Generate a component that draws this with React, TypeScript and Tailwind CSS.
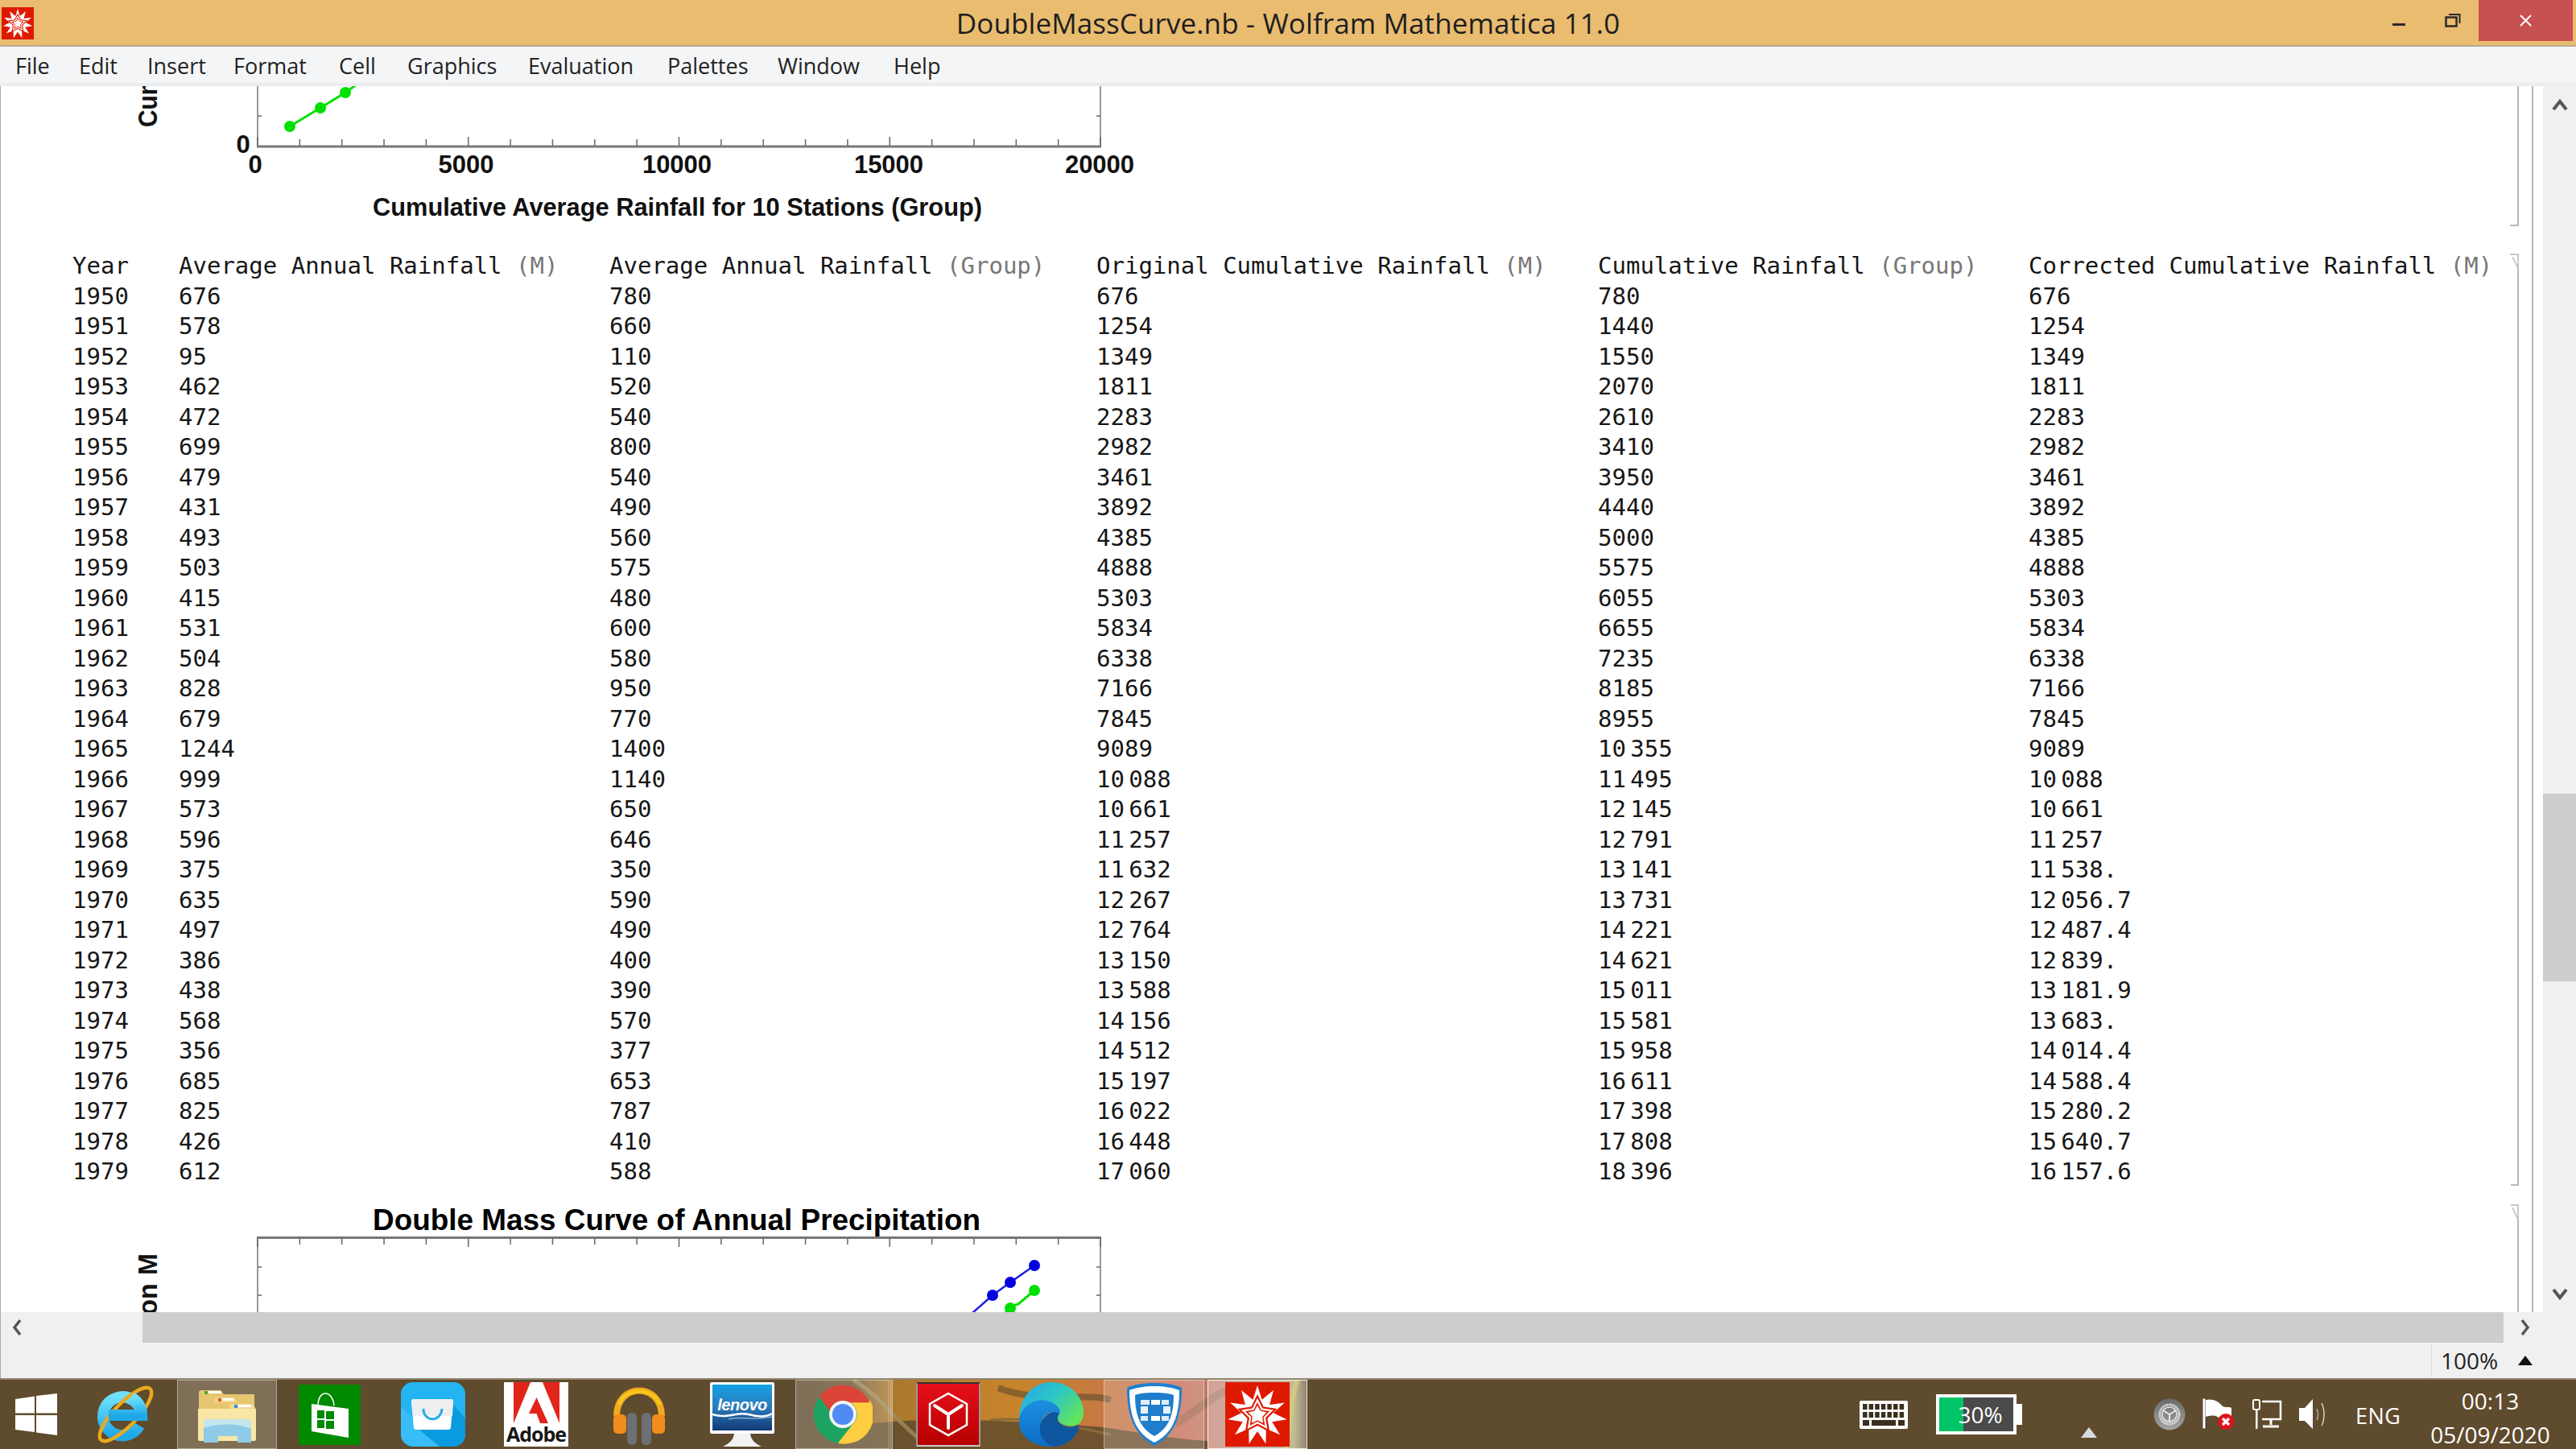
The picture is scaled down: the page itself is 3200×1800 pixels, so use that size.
import React from "react";

const rows: string[][] = [
  ["1950","676","780","676","780","676"],
  ["1951","578","660","1254","1440","1254"],
  ["1952","95","110","1349","1550","1349"],
  ["1953","462","520","1811","2070","1811"],
  ["1954","472","540","2283","2610","2283"],
  ["1955","699","800","2982","3410","2982"],
  ["1956","479","540","3461","3950","3461"],
  ["1957","431","490","3892","4440","3892"],
  ["1958","493","560","4385","5000","4385"],
  ["1959","503","575","4888","5575","4888"],
  ["1960","415","480","5303","6055","5303"],
  ["1961","531","600","5834","6655","5834"],
  ["1962","504","580","6338","7235","6338"],
  ["1963","828","950","7166","8185","7166"],
  ["1964","679","770","7845","8955","7845"],
  ["1965","1244","1400","9089","10355","9089"],
  ["1966","999","1140","10088","11495","10088"],
  ["1967","573","650","10661","12145","10661"],
  ["1968","596","646","11257","12791","11257"],
  ["1969","375","350","11632","13141","11538."],
  ["1970","635","590","12267","13731","12056.7"],
  ["1971","497","490","12764","14221","12487.4"],
  ["1972","386","400","13150","14621","12839."],
  ["1973","438","390","13588","15011","13181.9"],
  ["1974","568","570","14156","15581","13683."],
  ["1975","356","377","14512","15958","14014.4"],
  ["1976","685","653","15197","16611","14588.4"],
  ["1977","825","787","16022","17398","15280.2"],
  ["1978","426","410","16448","17808","15640.7"],
  ["1979","612","588","17060","18396","16157.6"],
];

const headers: [string, string][] = [
  ["Year", ""],
  ["Average Annual Rainfall", "(M)"],
  ["Average Annual Rainfall", "(Group)"],
  ["Original Cumulative Rainfall", "(M)"],
  ["Cumulative Rainfall", "(Group)"],
  ["Corrected Cumulative Rainfall", "(M)"],
];

function Num({ v }: { v: string }) {
  const m = v.match(/^(\d{2})(\d{3}\.?\d*)$/);
  if (!m) return <span>{v}</span>;
  return (
    <span>
      {m[1]}
      <span className="text-[9px] leading-[0]"> </span>
      {m[2]}
    </span>
  );
}

function star(cx: number, cy: number, R: number, r: number, n: number) {
  const p: string[] = [];
  for (let i = 0; i < n * 2; i++) {
    const a = -Math.PI / 2 + (i * Math.PI) / n;
    const q = i % 2 === 0 ? R : r;
    p.push(`${(cx + q * Math.cos(a)).toFixed(1)},${(cy + q * Math.sin(a)).toFixed(1)}`);
  }
  return p.join(" ");
}

function Ticks({ y, dir }: { y: number; dir: number }) {
  const t = [];
  for (let i = 0; i <= 20; i++) {
    const x = 319 + i * 52.35;
    const len = i % 5 === 0 ? 11 : 8;
    t.push(<line key={i} x1={x} x2={x} y1={y} y2={y + dir * len} stroke="#666" strokeWidth="1.5" />);
  }
  return <>{t}</>;
}

function PlotTop() {
  return (
    <svg width="1420" height="190" className="block" style={{ fontFamily: "'Liberation Sans', sans-serif" }}>
      <line x1="319" x2="319" y1="0" y2="75" stroke="#777" strokeWidth="1.5" />
      <line x1="1366" x2="1366" y1="0" y2="75" stroke="#777" strokeWidth="1.5" />
      <line x1="318" x2="1367" y1="75" y2="75" stroke="#777" strokeWidth="3" />
      <Ticks y={74} dir={-1} />
      <line x1="319" x2="324" y1="37" y2="37" stroke="#666" strokeWidth="1.5" />
      <line x1="1361" x2="1366" y1="37" y2="37" stroke="#666" strokeWidth="1.5" />
      <polyline points="359,50 397,27 428,8 442,-2" fill="none" stroke="#00e000" strokeWidth="3" />
      <circle cx="359" cy="50" r="7" fill="#00e000" />
      <circle cx="397" cy="27" r="7" fill="#00e000" />
      <circle cx="428" cy="8" r="7" fill="#00e000" />
      <text transform="translate(194 51) rotate(-90) scale(0.88 1)" fontSize="34" fontWeight="700" fill="#111">Cumulative Precipitation</text>
      <g fontSize="31" fontWeight="700" fill="#111" textAnchor="middle">
        <text x="301" y="83">0</text>
        <text x="316" y="108">0</text>
        <text x="578" y="108">5000</text>
        <text x="840" y="108">10000</text>
        <text x="1103" y="108">15000</text>
        <text x="1365" y="108">20000</text>
      </g>
      <text x="462" y="161" fontSize="31" fontWeight="700" fill="#111" textLength="757" lengthAdjust="spacingAndGlyphs">
        Cumulative Average Rainfall for 10 Stations (Group)
      </text>
    </svg>
  );
}

function PlotBottom() {
  return (
    <svg width="1420" height="155" className="block" style={{ fontFamily: "'Liberation Sans', sans-serif" }}>
      <g transform="translate(0 -2)">
        <text x="462" y="55" fontSize="36" fontWeight="700" fill="#000" textLength="755" lengthAdjust="spacingAndGlyphs">
          Double Mass Curve of Annual Precipitation
        </text>
        <line x1="319" x2="319" y1="64" y2="157" stroke="#777" strokeWidth="1.5" />
        <line x1="1366" x2="1366" y1="64" y2="157" stroke="#777" strokeWidth="1.5" />
        <line x1="318" x2="1367" y1="64.5" y2="64.5" stroke="#777" strokeWidth="3" />
        <Ticks y={65} dir={1} />
        <line x1="319" x2="324" y1="101" y2="101" stroke="#666" strokeWidth="1.5" />
        <line x1="319" x2="324" y1="136" y2="136" stroke="#666" strokeWidth="1.5" />
        <line x1="1361" x2="1366" y1="101" y2="101" stroke="#666" strokeWidth="1.5" />
        <line x1="1361" x2="1366" y1="136" y2="136" stroke="#666" strokeWidth="1.5" />
        <polyline points="1284,99 1254,120 1232,136 1207,158" fill="none" stroke="#2020e8" strokeWidth="2.5" />
        <circle cx="1284" cy="99" r="7" fill="#0000e0" />
        <circle cx="1254" cy="120" r="7" fill="#0000e0" />
        <circle cx="1232" cy="136" r="7" fill="#0000e0" />
        <polyline points="1284,130 1264,147 1254,150 1248,158" fill="none" stroke="#00e000" strokeWidth="3" />
        <circle cx="1284" cy="130" r="7" fill="#00e000" />
        <circle cx="1254" cy="152" r="7" fill="#00e000" />
        <text transform="translate(194 84) rotate(-90) scale(0.95 1)" fontSize="34" fontWeight="700" fill="#111" textAnchor="end">
          Cumulative Precipitation<tspan dx="11">M</tspan>
        </text>
      </g>
    </svg>
  );
}

function Brackets() {
  return (
    <svg width="42" height="1523" className="absolute right-0 top-0" fill="none" stroke="#b8b8b8" strokeWidth="2">
      <path d="M11 0V173H1" />
      <path d="M29 0V1523" />
      <path d="M11 226V1365H2" />
      <path d="M1 209H11V226L4 212" strokeWidth="1.5" />
      <path d="M11 1408V1523" />
      <path d="M2 1390H11V1408L4 1393" strokeWidth="1.5" />
    </svg>
  );
}

function Win() {
  return (
    <svg width="52" height="52" viewBox="0 0 52 52" fill="#fff">
      <polygon points="0,7 24,3.5 24,24.5 0,24.5" />
      <polygon points="26,3 52,0 52,24.5 26,24.5" />
      <polygon points="0,27 24,27 24,48 0,45" />
      <polygon points="26,27 52,27 52,52 26,48.5" />
    </svg>
  );
}

function IE() {
  return (
    <svg width="74" height="72" viewBox="0 0 74 72" fill="none">
      <defs>
        <linearGradient id="ieg" x1="0" y1="0" x2="0" y2="1">
          <stop offset="0" stopColor="#6fe0fa" />
          <stop offset="1" stopColor="#1fa8e8" />
        </linearGradient>
      </defs>
      <path d="M17 37H58A24 24 0 1 0 55 50" stroke="url(#ieg)" strokeWidth="14" />
      <ellipse cx="38" cy="36" rx="44" ry="14" transform="rotate(-46 38 36)" stroke="#e9a91e" strokeWidth="4.5" />
      <path d="M17 37H58A24 24 0 0 0 45 15" stroke="url(#ieg)" strokeWidth="14" />
    </svg>
  );
}

function Folder() {
  return (
    <svg width="74" height="70" viewBox="0 0 74 70">
      <path d="M2 8a3 3 0 0 1 3-3h24l4 5h38v20H2z" fill="#e6c66f" />
      <rect x="9" y="6" width="4" height="4" fill="#53a83b" />
      <rect x="14" y="6" width="16" height="3" fill="#fff" />
      <path d="M22 14h24l4 6H22z" fill="#f2d98e" />
      <rect x="26" y="15" width="4" height="4" fill="#e25a1c" />
      <rect x="31" y="15" width="14" height="3" fill="#fff" />
      <path d="M40 22h30l3 8H40z" fill="#f2d98e" />
      <rect x="46" y="23" width="4" height="4" fill="#2c8ed6" />
      <rect x="51" y="23" width="16" height="3" fill="#fff" />
      <path d="M1 28h72v38a2 2 0 0 1-2 2H3a2 2 0 0 1-2-2z" fill="#f8e7a6" />
      <path d="M8 46a5 5 0 0 1 5-5h49a5 5 0 0 1 5 5v24H50V62H26v8H8z" fill="#8fcbe6" />
      <path d="M8 46a5 5 0 0 1 5-5h49a5 5 0 0 1 5 5v7C50 46 25 46 8 52z" fill="#c2e5ee" />
    </svg>
  );
}

function Store() {
  return (
    <svg width="77" height="75" viewBox="0 0 77 75">
      <rect width="77" height="75" fill="#008a00" />
      <path d="M24 26C24 6 42 6 44 26" fill="none" stroke="#fff" strokeWidth="1.5" />
      <polygon points="16,24 62,30 62,66 16,58" fill="#fff" />
      <rect x="23" y="32" width="9" height="10" fill="#008a00" />
      <rect x="34" y="33" width="10" height="10" fill="#008a00" />
      <rect x="23" y="44" width="9" height="10" fill="#008a00" />
      <rect x="34" y="45" width="10" height="10" fill="#008a00" />
    </svg>
  );
}

function Bag() {
  return (
    <svg width="80" height="80" viewBox="0 0 80 80">
      <rect width="80" height="80" rx="15" fill="#38bdf8" />
      <path d="M0 15A15 15 0 0 1 15 0H65A15 15 0 0 1 80 15V50L60 28H15V45L0 30z" fill="#1db0f0" opacity="0.7" />
      <path d="M65 28L80 45V65A15 15 0 0 1 65 80H48L18 55z" fill="#0a9ade" />
      <path d="M13 24a3 3 0 0 1 3-3H62a3 3 0 0 1 3 3l-3 32a3 3 0 0 1-3 3H19a3 3 0 0 1-3-3z" fill="#fff" />
      <path d="M13 24a3 3 0 0 1 3-3H62a3 3 0 0 1 3 3l-1 18H15z" fill="#eceeef" />
      <path d="M28 33c0 17 22 17 23 0" fill="none" stroke="#29a9e6" strokeWidth="3" />
    </svg>
  );
}

function Adobe() {
  return (
    <div className="w-[80px] h-[80px] bg-white flex flex-col items-center overflow-hidden">
      <svg width="57" height="51" viewBox="0 0 57 51" className="shrink-0">
        <polygon points="0,0 21,0 0,51" fill="#e1251b" />
        <polygon points="36,0 57,0 57,51" fill="#e1251b" />
        <polygon points="28.5,19 43,51 33,51 28.5,39 19,39" fill="#e1251b" />
      </svg>
      <div className="text-[25px] leading-[27px] font-bold text-[#161616] tracking-[-1px] font-['Open_Sans',sans-serif]">Adobe</div>
    </div>
  );
}

function Headphones() {
  return (
    <svg width="66" height="76" viewBox="0 0 66 76" fill="none">
      <path d="M5 40C5 -2 61 -2 61 40" stroke="#f2a91f" strokeWidth="8" />
      <path d="M8 26C14 4 52 4 58 26" stroke="#f7c91c" strokeWidth="4" />
      <rect x="1" y="38" width="16" height="24" rx="5" fill="#ee8d1c" />
      <rect x="49" y="38" width="16" height="24" rx="5" fill="#ee8d1c" />
      <rect x="18" y="36" width="12" height="40" rx="5" fill="#6c6f73" />
      <rect x="36" y="36" width="12" height="40" rx="5" fill="#6c6f73" />
    </svg>
  );
}

function Lenovo() {
  return (
    <div className="w-[80px] h-[80px] flex flex-col items-center">
      <div className="w-[80px] h-[64px] bg-white rounded-[2px] p-[3px] pb-[4px]">
        <div className="relative w-full h-full bg-gradient-to-b from-[#0aa2e4] via-[#2a7ab8] to-[#123a78] flex items-center justify-center overflow-hidden">
          <span className="text-[20px] font-bold italic text-white font-['Liberation_Sans',sans-serif] tracking-[-0.5px] -mt-[8px]">lenovo</span>
          <svg width="74" height="12" viewBox="0 0 74 12" className="absolute left-0 top-[33px]" fill="none" stroke="#fff">
            <path d="M0 4C20 10 30 0 45 4C55 7 65 8 74 3" strokeWidth="2.5" />
            <path d="M20 10C35 6 50 12 74 7" strokeWidth="1" opacity=".7" />
          </svg>
        </div>
      </div>
      <svg width="52" height="16" viewBox="0 0 52 16">
        <path d="M16 0H36C37 8 42 12 50 16H2C10 12 15 8 16 0z" fill="#f2f2f2" />
      </svg>
    </div>
  );
}

function Chrome() {
  return (
    <svg width="74" height="74" viewBox="0 0 48 48">
      <circle cx="24" cy="24" r="23.5" fill="#1da462" />
      <path d="M24 13H46A23.5 23.5 0 0 1 20 47.2L33.5 30A11 11 0 0 0 24 13z" fill="#ffcd40" />
      <path d="M24 .5A23.5 23.5 0 0 1 45.6 14.5H24A11 11 0 0 0 13.6 21.5L5 9.5A23.5 23.5 0 0 1 24 .5z" fill="#db4437" />
      <circle cx="24" cy="24" r="11" fill="#f3f5f7" />
      <circle cx="24" cy="24" r="8.5" fill="#4f8bf3" />
    </svg>
  );
}

function RedBox() {
  return (
    <div className="w-[80px] h-[80px] bg-gradient-to-b from-[#e6101a] to-[#b60000] border-t-[2px] border-x-[2px] border-b-[2px] border-t-[#333] border-x-[#999] border-b-[#c9c9c9] flex items-center justify-center">
      <svg width="50" height="56" viewBox="0 0 50 56" fill="none" stroke="#fff">
        <polygon points="25,2 48,15 48,41 25,54 2,41 2,15" strokeWidth="2.5" />
        <path d="M8 17L25 28L42 17M25 28V45" strokeWidth="4" strokeLinecap="round" />
      </svg>
    </div>
  );
}

function Edge() {
  return (
    <svg width="80" height="80" viewBox="0 0 80 80">
      <defs>
        <linearGradient id="eg1" x1="0" y1="0" x2="1" y2="0.7">
          <stop offset="0" stopColor="#2aa3e8" />
          <stop offset="0.5" stopColor="#2bc6c8" />
          <stop offset="1" stopColor="#62e45a" />
        </linearGradient>
        <linearGradient id="eg2" x1="0" y1="0" x2="0" y2="1">
          <stop offset="0" stopColor="#1d8ee0" />
          <stop offset="1" stopColor="#0a6ec4" />
        </linearGradient>
      </defs>
      <path d="M40 0C64 0 80 18 80 38C80 52 70 56 60 54C50 53 45 46 50 38C48 28 30 22 18 28C8 33 2 42 0 46C0 20 16 0 40 0z" fill="url(#eg1)" />
      <path d="M0 46C3 28 22 18 38 24C50 29 52 36 50 39C36 32 24 46 28 58C31 70 42 78 50 79C46 80 42 80 40 80C15 80 -2 65 0 46z" fill="url(#eg2)" />
      <path d="M50 39C46 44 47 52 58 55C66 57 72 54 74 53C76 60 64 80 42 80C32 77 24 66 26 55C28 42 42 33 50 39z" fill="#0f56a0" />
    </svg>
  );
}

function Shield() {
  return (
    <svg width="68" height="78" viewBox="0 0 68 78">
      <path d="M34 0C48 0 60 2 68 6C68 40 60 64 34 78C8 64 0 40 0 6C8 2 20 0 34 0z" fill="#1e80d0" />
      <path d="M34 4C46 4 58 6 65 9C65 40 58 62 34 74C10 62 3 40 3 9C10 6 22 4 34 4z" fill="#fff" />
      <path d="M34 12C46 12 53 13 58 15C58 40 52 56 34 66C16 56 10 40 10 15C15 13 22 12 34 12z" fill="#1f7dcb" />
      <g fill="#fff">
        <rect x="30" y="21" width="11" height="6" />
        <rect x="17" y="21" width="11" height="6" opacity=".85" />
        <rect x="43" y="21" width="9" height="6" opacity=".85" />
        <rect x="17" y="29" width="9" height="9" opacity=".9" />
        <rect x="45" y="29" width="9" height="9" opacity=".9" />
        <rect x="17" y="41" width="9" height="6" opacity=".85" />
        <rect x="30" y="41" width="11" height="6" />
        <rect x="43" y="41" width="9" height="6" opacity=".85" />
      </g>
    </svg>
  );
}

function Wolfram({ s }: { s: number }) {
  return (
    <svg width={s} height={s} viewBox="0 0 80 80">
      <rect width="80" height="80" fill="#df1900" />
      <polygon points={star(40, 41, 37, 20, 11)} fill="#fff" />
      <polygon points={star(40, 41, 26, 13, 5)} fill="#df1900" />
      <polygon points={star(40, 41, 21, 10.5, 5)} fill="#fff" />
      <polygon points={star(40, 41, 16, 8, 5)} fill="#df1900" />
      <polygon points={star(40, 41, 12, 6.5, 5)} fill="#fff" />
    </svg>
  );
}

function Keyboard() {
  return (
    <svg width="60" height="35" viewBox="0 0 60 35">
      <rect width="60" height="35" rx="2" fill="#fff" />
      <g fill="#3a2f1e">
        {[0, 1, 2, 3, 4, 5, 6].map((i) => (
          <React.Fragment key={i}>
            <rect x={4 + i * 7.6} y="4" width="5.5" height="7" />
            <rect x={4 + i * 7.6} y="14" width="5.5" height="7" />
          </React.Fragment>
        ))}
        <rect x="4" y="24" width="8" height="7" />
        <rect x="15" y="24" width="30" height="7" />
        <rect x="48" y="24" width="8" height="7" />
      </g>
    </svg>
  );
}

function Gear() {
  return (
    <svg width="40" height="40" viewBox="0 0 40 40" fill="none">
      <defs>
        <linearGradient id="gg" x1="0" y1="0" x2="0" y2="1">
          <stop offset="0" stopColor="#6a6a6a" />
          <stop offset="1" stopColor="#a5a5a5" />
        </linearGradient>
      </defs>
      <circle cx="20" cy="20" r="19.5" fill="url(#gg)" />
      <circle cx="20" cy="20" r="12" stroke="#e8e8e8" strokeWidth="3" strokeDasharray="1.5 .8" />
      <circle cx="20" cy="20" r="9" stroke="#e8e8e8" strokeWidth="1.5" />
      <path d="M12 15L20 20L28 15M20 20V30" stroke="#e8e8e8" strokeWidth="2" />
    </svg>
  );
}

function Flag() {
  return (
    <svg width="40" height="40" viewBox="0 0 40 40">
      <rect x="0" y="0" width="4" height="38" fill="#fff" stroke="#2a2114" strokeWidth=".8" />
      <path d="M4 2C14 0 20 4 25 10C30 12 34 10 36 12V28H24C18 20 12 21 4 23z" fill="#fff" />
      <circle cx="29" cy="29" r="10" fill="#e0121a" />
      <path d="M25 25L33 33M33 25L25 33" stroke="#fff" strokeWidth="3.2" />
    </svg>
  );
}

function Net() {
  return (
    <svg width="40" height="40" viewBox="0 0 40 40" fill="none">
      <rect x="3" y="2" width="8" height="12" rx="2" stroke="#fff" strokeWidth="2" />
      <rect x="6" y="14" width="2.5" height="24" fill="#fff" />
      <path d="M14 4H37V26H14" stroke="#fff" strokeWidth="2.5" />
      <path d="M25 26V33M15 35H35" stroke="#fff" strokeWidth="3" />
    </svg>
  );
}

function Speaker() {
  return (
    <svg width="36" height="40" viewBox="0 0 36 40" fill="none">
      <path d="M1 12H8L18 1V38L8 28H1z" fill="#fff" />
      <path d="M23 13C25 17 25 23 23 27" stroke="#b9b1a2" strokeWidth="1.5" />
      <path d="M29 6C33 14 33 26 29 34" stroke="#d8d2c6" strokeWidth="1.5" />
    </svg>
  );
}

function Wallpaper() {
  return (
    <svg className="absolute left-[1000px] top-0" width="650" height="88" viewBox="1000 0 650 88">
      <defs>
        <linearGradient id="wp" x1="0" y1="0" x2="1" y2="0">
          <stop offset="0" stopColor="#5f4b2d" />
          <stop offset="0.09" stopColor="#6d5733" />
          <stop offset="0.16" stopColor="#a9782c" />
          <stop offset="0.4" stopColor="#c8842c" />
          <stop offset="0.58" stopColor="#c57843" />
          <stop offset="0.72" stopColor="#c8705a" />
          <stop offset="0.82" stopColor="#b98574" />
          <stop offset="0.87" stopColor="#9f9a80" />
          <stop offset="0.935" stopColor="#a89f68" />
          <stop offset="0.96" stopColor="#5f4b2d" />
          <stop offset="1" stopColor="#5f4b2d" />
        </linearGradient>
      </defs>
      <rect x="1000" y="0" width="650" height="88" fill="url(#wp)" />
      <path d="M1000 70C1100 40 1240 50 1360 58C1400 62 1440 72 1500 76V88H1000z" fill="#5f4b2d" opacity=".85" />
      <path d="M1060 0C1100 25 1110 50 1150 80" fill="none" stroke="#a08a5c" strokeWidth="5" opacity=".8" />
      <path d="M1240 10C1290 30 1350 15 1380 25" fill="none" stroke="#5f4b2d" strokeWidth="8" opacity=".6" />
      <path d="M1230 50C1280 45 1340 60 1380 68" fill="none" stroke="#8a6a38" strokeWidth="3" />
      <path d="M1460 55C1500 30 1510 15 1540 8" fill="none" stroke="#8a5f42" strokeWidth="10" opacity=".5" />
      <path d="M1612 0C1600 30 1606 60 1596 88" fill="none" stroke="#c4b14a" strokeWidth="6" opacity=".9" />
    </svg>
  );
}

const menu: [string, string][] = [
  ["File", "w-[79px]"],
  ["Edit", "w-[85px]"],
  ["Insert", "w-[107px]"],
  ["Format", "w-[131px]"],
  ["Cell", "w-[85px]"],
  ["Graphics", "w-[150px]"],
  ["Evaluation", "w-[173px]"],
  ["Palettes", "w-[137px]"],
  ["Window", "w-[144px]"],
  ["Help", "w-[70px]"],
];

const boxCls = "w-[124px] h-[86px] flex items-center justify-center border border-white/40 bg-white/20";

export default function App() {
  return (
    <div className="w-[3200px] h-[1800px] flex flex-col overflow-hidden bg-white text-[#111] font-['Open_Sans',sans-serif]">
      {/* Title bar */}
      <div className="h-[58px] shrink-0 bg-[#e9bc70] border-b-2 border-[#b7aa90] grid grid-cols-[1fr_auto_1fr]">
        <div className="pl-[2px] pt-[9px]">
          <Wolfram s={40} />
        </div>
        <div className="text-[35px] leading-[58px] text-[#1e1e1e] tracking-[0.1px]">DoubleMassCurve.nb - Wolfram Mathematica 11.0</div>
        <div className="flex justify-end items-start pr-[4px]">
          <div className="h-[3px] mt-[29px] w-[16px] bg-[#2b2b2b]" />
          <svg width="20" height="18" viewBox="0 0 20 18" fill="none" stroke="#2b2b2b" strokeWidth="2.5" className="ml-[49px] mt-[16px]">
            <rect x="1.5" y="5.5" width="13" height="11" />
            <path d="M5 2H18.5V13" strokeWidth="2" />
          </svg>
          <div className="ml-[22px] w-[117px] h-[51px] bg-[#c75050] flex items-center justify-center">
            <svg width="15" height="15" viewBox="0 0 15 15" stroke="#fff" strokeWidth="2">
              <path d="M1 1L14 14M14 1L1 14" />
            </svg>
          </div>
        </div>
      </div>

      {/* Menu */}
      <div className="h-[49px] shrink-0 bg-[#f4f5f7] border-b-4 border-[#ebecee] flex items-center pl-[19px] pt-[2px] text-[27px] leading-[44px] text-[#222]">
        {menu.map(([m, w]) => (
          <div key={m} className={w}>{m}</div>
        ))}
      </div>

      {/* Notebook */}
      <div className="h-[1523px] shrink-0 flex border-l border-[#aaa] overflow-hidden">
        <div className="relative w-[3158px] h-full overflow-hidden bg-white">
          <div className="h-[190px]"><PlotTop /></div>
          <div className="h-[15px]" />
          <div className="grid grid-cols-[132px_535px_605px_623px_535px_auto] auto-rows-[37.5px] pl-[89px] items-center text-[29px] leading-[37px] text-[#161616] font-['DejaVu_Sans_Mono',monospace] whitespace-pre">
            {headers.map(([h, u], i) => (
              <div key={i}>
                {h}
                {u && <span className="text-[#777]"> {u}</span>}
              </div>
            ))}
            {rows.map((r) =>
              r.map((c, j) => (
                <div key={r[0] + j}>
                  <Num v={c} />
                </div>
              )),
            )}
          </div>
          <div className="h-[155px]"><PlotBottom /></div>
          <Brackets />
        </div>
        <div className="flex-1 bg-[#f0f0f0] flex flex-col items-center">
          <svg width="20" height="16" viewBox="0 0 20 16" className="mt-[15px] shrink-0" fill="none" stroke="#555" strokeWidth="4">
            <path d="M2 14L10 4L18 14" />
          </svg>
          <div className="w-full h-[233px] bg-[#cdcdcd] mt-[848px] shrink-0" />
          <svg width="20" height="16" viewBox="0 0 20 16" className="mt-[381px] shrink-0" fill="none" stroke="#555" strokeWidth="4">
            <path d="M2 2L10 12L18 2" />
          </svg>
        </div>
      </div>

      {/* Horizontal scrollbar */}
      <div className="h-[38px] shrink-0 bg-[#f0f0f0] flex items-center border-l border-[#aaa]">
        <svg width="12" height="22" viewBox="0 0 12 22" className="ml-[14px] shrink-0" fill="none" stroke="#555" strokeWidth="3.5">
          <path d="M10 2L3 11L10 20" />
        </svg>
        <div className="ml-[150px] w-[2933px] h-full bg-[#cdcdcd]" />
        <svg width="12" height="22" viewBox="0 0 12 22" className="ml-[21px] shrink-0" fill="none" stroke="#555" strokeWidth="3.5">
          <path d="M2 2L9 11L2 20" />
        </svg>
      </div>

      {/* Status bar */}
      <div className="h-[44px] shrink-0 bg-[#f0f0f0] flex justify-end items-center border-l border-[#aaa] text-[28px] text-[#222]">
        <div className="w-[180px] h-[40px] border-l border-[#dcdcdc] flex items-center pl-[11px] leading-[40px]">
          100%
          <svg width="18" height="12" viewBox="0 0 18 12" className="ml-[25px]">
            <polygon points="9,0 18,12 0,12" fill="#111" />
          </svg>
        </div>
      </div>

      {/* Taskbar */}
      <div className="relative flex-1 bg-[#5f4b2d] border-t-2 border-[#8f846e] flex items-center overflow-hidden text-white">
        <Wallpaper />
        <div className="relative flex items-center h-full w-full">
          <div className="ml-[19px]"><Win /></div>
          <div className="ml-[47px]"><IE /></div>
          <div className={`ml-[28px] ${boxCls}`}><Folder /></div>
          <div className="ml-[27px]"><Store /></div>
          <div className="ml-[50px]"><Bag /></div>
          <div className="ml-[48px]"><Adobe /></div>
          <div className="ml-[55px]"><Headphones /></div>
          <div className="ml-[55px]"><Lenovo /></div>
          <div className="ml-[26px] w-[117px] h-[86px] flex items-center justify-center border border-white/40 bg-white/20"><Chrome /></div>
          <div className="w-[3px] h-[86px] ml-[1px] border border-white/40 bg-white/20" />
          <div className="ml-[29px]"><RedBox /></div>
          <div className="ml-[48px]"><Edge /></div>
          <div className={`ml-[25px] w-[125px] ${boxCls}`}><Shield /></div>
          <div className={`ml-[4px] ${boxCls} border-white/80 bg-white/30`}><Wolfram s={80} /></div>

          <div className="ml-[686px]"><Keyboard /></div>
          <div className="ml-[35px] flex items-center">
            <div className="relative w-[100px] h-[50px] border-[4px] border-white bg-[#4a4a4a] flex">
              <div className="w-[30px] bg-[#00c566]" />
              <div className="absolute inset-0 flex items-center justify-center text-[28px] leading-none pl-[10px]">30%</div>
            </div>
            <div className="w-[7px] h-[26px] bg-white" />
          </div>
          <svg width="22" height="13" viewBox="0 0 22 13" className="ml-[72px] mt-[44px]">
            <polygon points="11,0 21,13 1,13" fill="#d8dbe4" />
          </svg>
          <div className="ml-[69px]"><Gear /></div>
          <div className="ml-[21px]"><Flag /></div>
          <div className="ml-[20px]"><Net /></div>
          <div className="ml-[19px]"><Speaker /></div>
          <div className="ml-[35px] mt-[4px] text-[27px] tracking-[0.5px]">ENG</div>
          <div className="ml-[33px] mt-[8px] w-[156px] flex flex-col items-center text-[28px] leading-[42px]">
            <div>00:13</div>
            <div>05/09/2020</div>
          </div>
        </div>
      </div>
    </div>
  );
}
